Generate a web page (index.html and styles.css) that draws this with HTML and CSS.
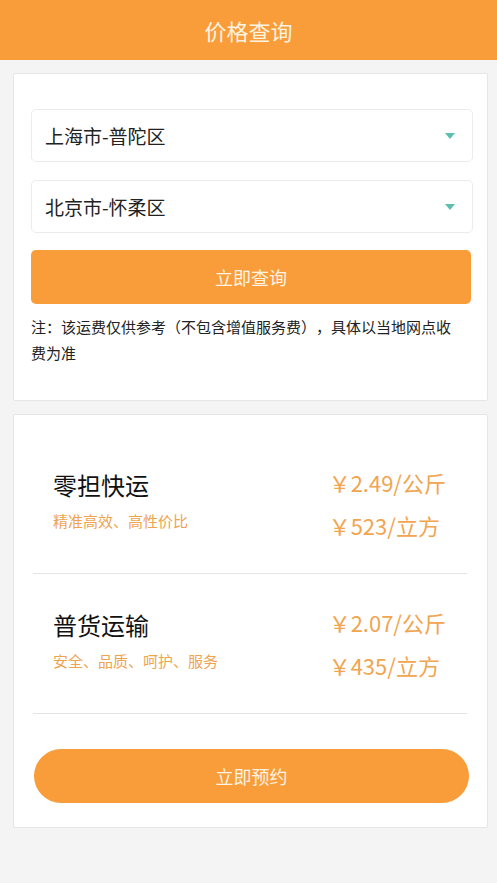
FILE: index.html
```html
<!DOCTYPE html>
<html lang="zh-CN">
<head>
<meta charset="utf-8">
<title>价格查询</title>
<link rel="stylesheet" href="styles.css">
</head>
<body>
<header class="topbar">价格查询</header>
<main class="page">
  <section class="card query">
    <div class="select"><span>上海市-普陀区</span><i class="caret"></i></div>
    <div class="select"><span>北京市-怀柔区</span><i class="caret"></i></div>
    <button class="btn-query">立即查询</button>
    <p class="note">注：该运费仅供参考（不包含增值服务费），具体以当地网点收费为准</p>
  </section>
  <section class="card result">
    <div class="row">
      <div class="info">
        <div class="name">零担快运</div>
        <div class="desc">精准高效、高性价比</div>
      </div>
      <div class="prices">
        <div class="price">￥2.49/公斤</div>
        <div class="price">￥523/立方</div>
      </div>
    </div>
    <div class="row">
      <div class="info">
        <div class="name">普货运输</div>
        <div class="desc">安全、品质、呵护、服务</div>
      </div>
      <div class="prices">
        <div class="price">￥2.07/公斤</div>
        <div class="price">￥435/立方</div>
      </div>
    </div>
    <button class="btn-book">立即预约</button>
  </section>
</main>
</body>
</html>
```
FILE: styles.css
```css
* { box-sizing: border-box; }
html, body { margin: 0; padding: 0; }
body {
  background: #f4f4f4;
  font-family: "Noto Sans CJK SC", "Noto Sans", sans-serif;
  color: #222;
  width: 497px;
  min-height: 883px;
  text-spacing-trim: space-all;
}
.topbar {
  height: 60px;
  background: #f99d3b;
  color: #fff4e2;
  font-size: 22px;
  line-height: 60px;
  text-align: center;
}
.page { padding: 13px 9px 0 13px; }
.card {
  background: #fff;
  border: 1px solid #e6e6e6;
  border-radius: 2px;
}
.query { padding: 35px 14px 34px 17px; }
.select {
  height: 53px;
  border: 1px solid #ececec;
  border-radius: 5px;
  display: flex;
  align-items: center;
  justify-content: space-between;
  padding: 0 17px 0 13px;
  font-size: 19px;
  color: #222;
  margin-bottom: 18px;
}
.caret {
  width: 0; height: 0;
  border-left: 5px solid transparent;
  border-right: 5px solid transparent;
  border-top: 6px solid #5cbfae;
}
.btn-query {
  display: block;
  width: 440px;
  height: 54px;
  margin-top: -1px;
  border: 0;
  border-radius: 5px;
  background: #f99d3b;
  color: #fff4e2;
  font-family: inherit;
  font-size: 18px;
}
.note {
  margin: 10px 10px 0 0;
  font-size: 15px;
  line-height: 26px;
  color: #222;
  text-spacing-trim: space-all;
}
.result { margin-top: 13px; padding: 19px 20px 24px 19px; }
.row {
  height: 140px;
  border-bottom: 1px solid #e4e4e4;
  display: flex;
  justify-content: space-between;
  align-items: center;
  padding: 0 21px 0 20px;
}
.info { margin-top: -8px; }
.name { font-size: 24px; line-height: 34px; color: #111; }
.desc { font-size: 15px; line-height: 22px; color: #eea44f; margin-top: 8px; }
.price { font-size: 22px; line-height: 43px; color: #f1a550; }
.prices { margin-top: 0; }
.btn-book {
  display: block;
  width: 435px;
  height: 54px;
  margin: 35px 0 0 1px;
  border: 0;
  border-radius: 27px;
  background: #f99d3b;
  color: #fff4e2;
  font-family: inherit;
  font-size: 18px;
}
```
